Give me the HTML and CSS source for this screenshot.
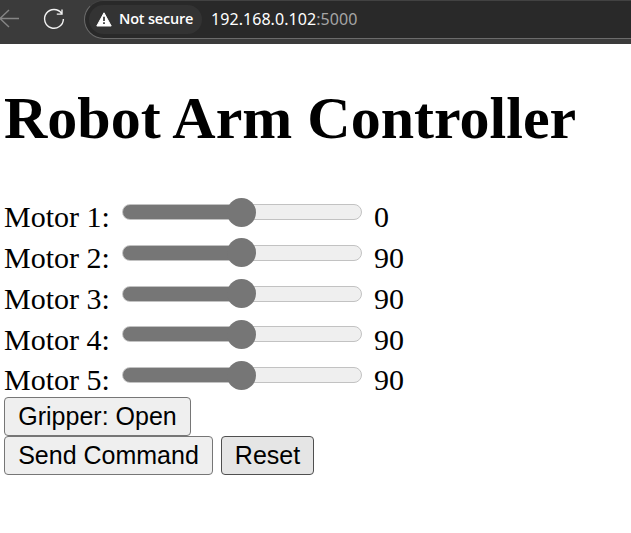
FILE: index.html
```html
<!DOCTYPE html>
<html lang="en">
<head>
<meta charset="utf-8">
<title>Robot Arm Controller</title>
<link rel="stylesheet" href="styles.css">
</head>
<body>
<header class="toolbar">
  <svg class="nav-icons" width="84" height="44" viewBox="0 0 84 44" fill="none">
    <path class="back" d="M19 18.5H0M9 10L0 18.5L9 27"/>
    <path class="reload" d="M61.6 13.3A9.4 9.4 0 1 0 63.4 19M62 9.5V14.1H56.8"/>
  </svg>
  <div class="address">
    <div class="security">
      <svg class="warning" width="16" height="15" viewBox="0 0 16 15">
        <path d="M8 .8L15.2 14H.8Z" fill="#fff" stroke="#fff" stroke-linejoin="round"/>
        <path d="M8 4.8V9M8 10.3V12" stroke="#333" stroke-width="1.7"/>
      </svg>
      <span class="security-label">Not secure</span>
    </div>
    <span class="url">192.168.0.102<span class="port">:5000</span></span>
  </div>
</header>
<main class="page">
  <h1>Robot Arm Controller</h1>
  <div class="motors">
    <div class="motor"><label>Motor 1:</label><div class="slider"><span class="thumb"></span></div><span>0</span></div>
    <div class="motor"><label>Motor 2:</label><div class="slider"><span class="thumb"></span></div><span>90</span></div>
    <div class="motor"><label>Motor 3:</label><div class="slider"><span class="thumb"></span></div><span>90</span></div>
    <div class="motor"><label>Motor 4:</label><div class="slider"><span class="thumb"></span></div><span>90</span></div>
    <div class="motor"><label>Motor 5:</label><div class="slider"><span class="thumb"></span></div><span>90</span></div>
  </div>
  <div class="actions"><button class="gripper">Gripper: Open</button></div>
  <div class="actions"><button class="send">Send Command</button><button class="reset">Reset</button></div>
</main>
</body>
</html>
```
FILE: styles.css
```css
* { box-sizing: border-box; }
body {
  margin: 0;
  overflow: hidden;
  background: #fff;
  color: #000;
  font: 30px/34px "Liberation Serif", serif;
}
.toolbar {
  display: flex;
  height: 44px;
  background: #3b3b3b;
  overflow: hidden;
}
.nav-icons { flex: none; }
.nav-icons path { stroke-width: 1.4; }
.back { stroke: #858585; }
.reload { stroke: #f2f2f2; }
.address {
  display: flex;
  align-items: center;
  flex: none;
  width: 580px;
  height: 39px;
  padding: 0 0 1px 4px;
  border: 1px solid #6b6b6b;
  border-top-color: #424242;
  border-radius: 20px;
  background: #292929;
  white-space: nowrap;
}
.security {
  display: flex;
  align-items: center;
  width: 113px;
  height: 29px;
  padding-left: 7px;
  border-radius: 15px;
  background: #333;
}
.security-label {
  margin-left: 7px;
  color: #fff;
  font: 600 14.5px/20px "Open Sans", sans-serif;
  letter-spacing: -0.2px;
}
.url {
  margin-left: 9px;
  color: #fff;
  font: 16px/20px "Noto Sans", sans-serif;
  letter-spacing: 0.06px;
}
.port { color: #a5a5a5; }
.page { padding: 0 4px; }
h1 {
  margin: 40px 0;
  font-size: 60px;
  line-height: 69px;
}
.motors {
  height: 204px;
  padding-top: 4px;
}
.motor {
  display: grid;
  grid-template-columns: 118px 240px auto;
  height: 40.75px;
}
.motor > span { margin-left: 12px; }
.motor label, .motor > span { padding-top: 3.3px; }
.slider {
  display: flex;
  align-items: center;
  justify-content: center;
  height: 16px;
  margin-top: 7px;
  border: 1px solid #c2c2c2;
  border-radius: 8px;
  background: linear-gradient(90deg, #767676 50%, #efefef 50%) border-box;
}
.thumb {
  flex: none;
  width: 29px;
  height: 29px;
  margin-right: 1px;
  border-radius: 50%;
  background: #767676;
}
.actions {
  display: flex;
  gap: 8px;
  height: 39px;
}
button {
  height: 39px;
  padding: 0;
  border: 1px solid #767676;
  border-radius: 4px;
  background: #efefef;
  color: #000;
  font: 25px/29px "Liberation Sans", sans-serif;
}
.gripper { width: 187px; }
.send { width: 209px; }
.reset { width: 93px; border-color: #4f4f4f; background: #e5e5e5; }
```
